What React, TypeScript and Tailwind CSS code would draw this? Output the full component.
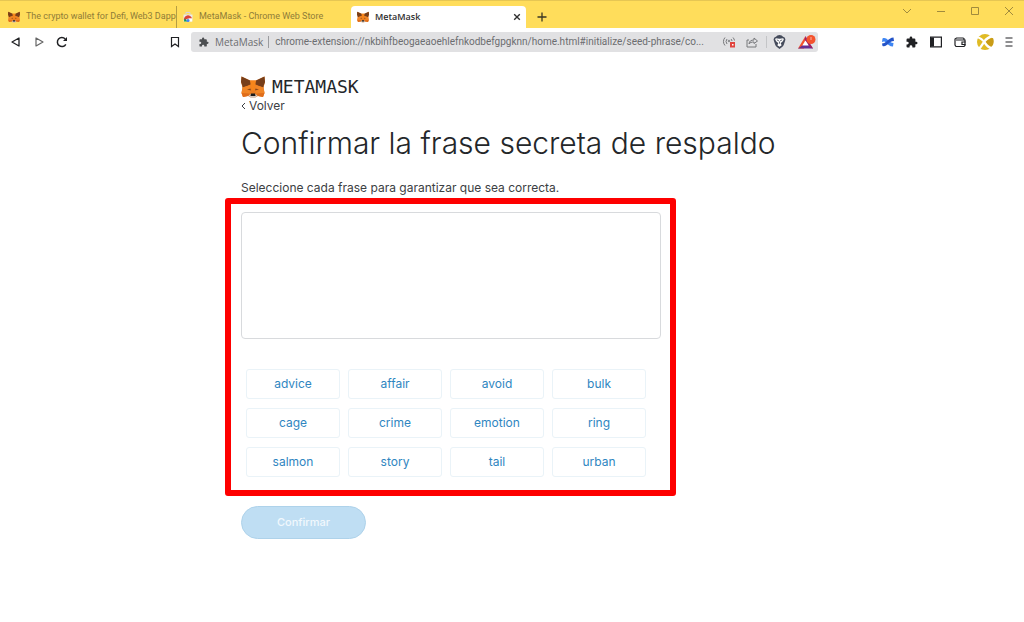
import React from 'react';

const WORDS: string[] = [
  'advice', 'affair', 'avoid', 'bulk',
  'cage', 'crime', 'emotion', 'ring',
  'salmon', 'story', 'tail', 'urban',
];

function Fox({ className }: { className: string }) {
  return (
    <svg viewBox="0 0 48 44" className={className} aria-hidden="true">
      <path d="M1 1l17 8h12l17-8 1 11-3 11 2 11-3 8-10-2-6 3h-8l-6-3-10 2-3-8 2-11L0 12z" fill="#e97d22" />
      <path d="M1 1l17 8 3 7-9 4-9 3 0-3-3-8z" fill="#763e1a" />
      <path d="M47 1l-17 8-3 7 9 4 9 3 0-3 3-8z" fill="#763e1a" />
      <path d="M18 9h12l-3 20h-6z" fill="#f6851b" />
      <path d="M3 23l16-5 2 11-5 6-15-1z" fill="#f08526" />
      <path d="M45 23l-16-5-2 11 5 6 15-1z" fill="#f08526" />
      <path d="M1 34l14 1 3 5h-4l-10 2z" fill="#e06d1a" />
      <path d="M47 34l-14 1-3 5h4l10 2z" fill="#e06d1a" />
      <path d="M12 27l7-2 1 4z" fill="#8a4518" />
      <path d="M36 27l-7-2-1 4z" fill="#8a4518" />
      <path d="M15 39l5-3h8l5 3-5 5h-8z" fill="#d7c8be" />
      <path d="M20 35h8l1 5H19z" fill="#1b1b1b" />
    </svg>
  );
}

function Puzzle({ className }: { className: string }) {
  return (
    <svg viewBox="1 0 23 23" className={className} fill="currentColor" aria-hidden="true">
      <path d="M20.500 11H19V7a2 2 0 0 0-2-2h-4V3.500a2.500 2.500 0 0 0-5 0V5H4a2 2 0 0 0-2 2v3.800h1.500a2.700 2.700 0 0 1 0 5.400H2V20a2 2 0 0 0 2 2h3.800v-1.500a2.700 2.700 0 0 1 5.400 0V22H17a2 2 0 0 0 2-2v-4h1.500a2.500 2.500 0 0 0 0-5z" />
    </svg>
  );
}

function TabStrip() {
  return (
    <div className="flex h-7 border-t border-[#e6c653] bg-[#ffdd5b] font-['Roboto',sans-serif] text-[9px] text-[#8f7c38]">
      <div role="tablist" className="flex items-end">
        <button role="tab" aria-selected="false" className="flex h-[22px] w-[177px] items-center gap-1.5 border-r border-[#b59d43] pl-2">
          <Fox className="h-3 w-3 shrink-0" />
          <span className="whitespace-nowrap">The crypto wallet for Defi, Web3 Dapp</span>
        </button>
        <button role="tab" aria-selected="false" className="flex h-[22px] w-[174px] items-center gap-1.5 pl-1.5">
          <svg viewBox="0 0 20 20" className="h-2.5 w-2.5 shrink-0" aria-hidden="true">
            <path d="M1 5h18v14H1z" fill="#e9e9ea" />
            <path d="M6 5V1h8v4" fill="none" stroke="#d5d6d9" strokeWidth="2" />
            <path d="M2 17a8 8 0 0 1 16-4h-8z" fill="#db4437" />
            <path d="M2 19a8 8 0 0 1 2-6l5 6z" fill="#0f9d58" />
            <path d="M12 13h6v6h-5z" fill="#fff" />
            <circle cx="10" cy="17" r="3" fill="#4285f4" />
          </svg>
          <span>MetaMask - Chrome Web Store</span>
        </button>
        <div className="flex h-[22px] w-[175px] items-center rounded-t bg-white pl-1.5 pr-[3px] text-[#303030]">
          <button role="tab" aria-selected="true" className="flex grow items-center gap-1.5 font-['Open_Sans',sans-serif] font-semibold">
            <Fox className="h-3 w-3 shrink-0" />
            <span>MetaMask</span>
          </button>
          <button aria-label="Cerrar pestaña" className="p-0.5">
            <svg viewBox="0 0 10 10" className="h-2 w-2" stroke="#303030" strokeWidth="1.700"><path d="M1.500 1.500l7 7m0-7l-7 7" /></svg>
          </button>
        </div>
        <button aria-label="Nueva pestaña" className="flex h-[22px] w-8 items-center justify-center">
          <svg viewBox="0 0 10 10" className="h-2.5 w-2.5" stroke="#3b3724" strokeWidth="1.300"><path d="M5 .5v9M.5 5h9" /></svg>
        </button>
      </div>
      <div className="ml-auto flex h-5 items-center gap-6 pr-2.5 text-[#a18b3d]">
        <button aria-label="Buscar pestañas"><svg viewBox="0 0 10 10" className="h-2.5 w-2.5" fill="none" stroke="currentColor"><path d="M1 3l4 4 4-4" /></svg></button>
        <button aria-label="Minimizar"><svg viewBox="0 0 10 10" className="h-2.5 w-2.5" fill="none" stroke="currentColor"><path d="M1 5.500h8" /></svg></button>
        <button aria-label="Maximizar"><svg viewBox="0 0 10 10" className="h-2.5 w-2.5" fill="none" stroke="currentColor"><path d="M1.500 1.500h7v7h-7z" /></svg></button>
        <button aria-label="Cerrar"><svg viewBox="0 0 10 10" className="h-2.5 w-2.5" fill="none" stroke="currentColor"><path d="M1 1l8 8m0-8l-8 8" /></svg></button>
      </div>
    </div>
  );
}

function Toolbar() {
  return (
    <div className="flex h-[27px] items-center bg-white text-[#202124]">
      <div className="flex w-[191px] shrink-0 items-center gap-[11px] pl-2.5 pr-2.5">
        <button aria-label="Atrás"><svg viewBox="0 0 12 12" className="h-3 w-3" fill="none" stroke="currentColor" strokeWidth="1.300" strokeLinejoin="round"><path d="M9 2v8L2 6z" /></svg></button>
        <button aria-label="Adelante"><svg viewBox="0 0 12 12" className="h-3 w-3" fill="none" stroke="#666" strokeWidth="1.200" strokeLinejoin="round"><path d="M3 2v8l7-4z" /></svg></button>
        <button aria-label="Recargar">
          <svg viewBox="0 0 12 12" className="h-3 w-3" fill="none" stroke="currentColor" strokeWidth="1.500"><path d="M9.800 8.300A4.500 4.500 0 1 1 9.200 3" /><path d="M11 1v4H7z" fill="currentColor" stroke="none" /></svg>
        </button>
        <button aria-label="Marcador" className="ml-auto"><svg viewBox="0 0 12 12" className="h-3 w-3" fill="none" stroke="currentColor" strokeWidth="1.200"><path d="M2.500 1.500h7v9L6 8l-3.500 2.500z" /></svg></button>
      </div>
      <div className="flex h-5 min-w-0 grow items-center rounded-[3px] bg-[#e1e1e3] text-[10px] text-[#6c6d70]">
        <Puzzle className="ml-2 h-2.5 w-2.5 shrink-0 text-[#4d4f52]" />
        <label htmlFor="url" className="ml-1.5 shrink-0 border-r border-[#9b9c9f] pr-[5px] leading-3">MetaMask</label>
        <input id="url" readOnly className="ml-1.5 min-w-0 grow bg-transparent font-['Roboto',sans-serif] leading-4 outline-none" value="chrome-extension://nkbihfbeogaeaoehlefnkodbefgpgknn/home.html#initialize/seed-phrase/co..." />
        <div className="flex shrink-0 items-center gap-3 pr-0.5">
          <button aria-label="Señal bloqueada">
            <svg viewBox="0 0 14 12" className="h-3 w-3.5" fill="none" stroke="#77787b"><path d="M3 1.500a6 6 0 0 0 0 8M5 3a4 4 0 0 0 0 5M11 1.500a6 6 0 0 1 1.500 3M9 3a4 4 0 0 1 1 2" /><circle cx="7" cy="5" r=".8" /><path d="M8 6h5v5.500H8z" fill="#e0443e" stroke="none" /><path d="M10 8h1.500v1.500H10z" fill="#fff" stroke="none" /></svg>
          </button>
          <button aria-label="Compartir" className="-ml-0.5 border-r border-[#c4c5c7] pr-2">
            <svg viewBox="0 0 12 12" className="h-3 w-3" fill="none" stroke="#77787b"><path d="M3 4H1v7h9V8M3 8c.3-3 2-4 5-4V2l3.500 3L8 7.500V6C5.500 6 4 6.500 3 8z" /></svg>
          </button>
          <button aria-label="Brave Shields" className="-ml-1.5">
            <svg viewBox="0 0 24 26" className="h-3.5 w-[13px]"><path d="M12 0l4 1 2 2 4 2 1 4-3 9c-1 3-5 5-8 8-3-3-7-5-8-8L1 9l1-4 4-2 2-2z" fill="#454b5b" /><path d="M5 6l7 1 7-1 1 3-3 4-3 2 2 4-4 3-4-3 2-4-3-2-3-4z" fill="#fff" /><path d="M7 9l4 2m6-2l-4 2m-1 1v4" stroke="#454b5b" strokeWidth="1.500" /></svg>
          </button>
          <button aria-label="Brave Rewards">
            <svg viewBox="0 0 18 14" className="h-3.5 w-[18px]"><path d="M7.500 1L0 13.500h6z" fill="#f4502c" /><path d="M0 13.500h15l-2.500-3.500H5z" fill="#662d91" /><path d="M7.500 1l7.500 12.500-3-1L6.500 5z" fill="#9e1f63" /><path d="M7.500 5.500L4.300 10.500h6.400z" fill="#fff" /><circle cx="13" cy="4.500" r="4.500" fill="#f4532d" /><path d="M13 2v3" stroke="#f9b3a2" /></svg>
          </button>
        </div>
      </div>
      <div className="ml-16 flex shrink-0 items-center gap-3 pr-2.5">
        <button aria-label="Extensión">
          <svg viewBox="0 0 12 12" className="h-3 w-3"><path d="M.5 2.500c2-1 4 0 5.500 1.500C7.500 5.500 9 7 11.500 7l-.5 3.500C7.500 10.500 6 8.500 4.500 7 3 5.500 2 5 0 6z" fill="#3e86f4" /><path d="M11.500 1.500L12 5C9.500 5 8 6 6.500 7.500 5 9 3 11 .5 10L0 7.500c2 0 3.500-1 5-2.500s4-3.500 6.500-3.500z" fill="#2454c8" /></svg>
        </button>
        <button aria-label="Extensiones"><Puzzle className="h-3 w-3" /></button>
        <button aria-label="Panel lateral"><svg viewBox="0 0 12 12" className="h-3 w-3"><path d="M.6 1.100h10.800v9.800H.6z" fill="none" stroke="currentColor" strokeWidth="1.200" /><path d="M1 1.500h3v9H1z" fill="currentColor" /></svg></button>
        <button aria-label="Cartera"><svg viewBox="0 0 12 12" className="h-3 w-3" fill="none" stroke="currentColor" strokeWidth="1.200"><path d="M10 4V2.500L9 2H2.500L1 3v6l1 1.500h8l1-1V4H2" /><path d="M11.500 6H8v2.500h3.500" /></svg></button>
        <button aria-label="Perfil" className="-ml-0.5">
          <svg viewBox="0 0 18 18" className="h-[18px] w-[18px]"><circle cx="9" cy="9" r="8" fill="#e0bb25" /><path d="M9 9c3-3 5-4 8-4a8 8 0 0 1-5 11c-1-3-2-5-3-7z" fill="#c99c17" /><path d="M1 4c4 1 6 3 8 6s4 5 7 5M17 3c-5 1-7 3-9 6s-3 5-5 7" fill="none" stroke="#fff" strokeWidth="2.300" /></svg>
        </button>
        <button aria-label="Menú" className="-ml-0.5"><svg viewBox="0 0 10 12" className="h-3 w-2.5" stroke="currentColor" strokeWidth="1.200"><path d="M1.500 2h7M1.500 6h7M1.500 10h7" /></svg></button>
      </div>
    </div>
  );
}

export default function App() {
  return (
    <div className="min-h-screen bg-white font-['Open_Sans',sans-serif]">
      <TabStrip />
      <Toolbar />
      <main className="mx-auto max-w-[542px] pb-10 pt-5 font-['Inter',sans-serif] text-[#24272a]">
        <div className="flex h-[23px] items-center gap-[7px]">
          <Fox className="h-[22px] w-6" />
          <span className="font-['DejaVu_Sans_Mono',monospace] text-lg leading-5">METAMASK</span>
        </div>
        <a href="#volver" className="flex h-4 items-center gap-[3px] text-[12px] text-[#3c4043]">
          <svg viewBox="0 0 5 8" className="h-2 w-[5px]" fill="none" stroke="currentColor"><path d="M4 1L1 4l3 3" /></svg>
          Volver
        </a>
        <h1 className="mt-[11px] whitespace-nowrap text-[30px] font-light leading-9">Confirmar la frase secreta de respaldo</h1>
        <p className="mt-[19px] text-[12px] leading-4 text-[#3c4043]">Seleccione cada frase para garantizar que sea correcta.</p>
        <section className="-ml-4 mt-0.5 w-[451px] max-w-full rounded-[3px] border-[6px] border-[#fe0000] px-[9px] pb-[13px] pt-2">
          <div className="ml-px h-[127px] rounded-[4px] border border-[#d8dadd]" />
          <div className="ml-1.5 mr-[15px] mt-[30px] grid grid-cols-4 gap-x-2 gap-y-[9px]">
            {WORDS.map((word) => (
              <button key={word} className="h-[30px] rounded-[3px] border border-[#eaf3f8] text-[12px] leading-4 text-[#2f86c1]">
                {word}
              </button>
            ))}
          </div>
        </section>
        <button disabled className="mt-2.5 h-[33px] w-[125px] rounded-full border border-[#aed2ea] bg-[#bfdef3] text-[11px] font-medium text-[#f1f8fd]">
          Confirmar
        </button>
      </main>
    </div>
  );
}
